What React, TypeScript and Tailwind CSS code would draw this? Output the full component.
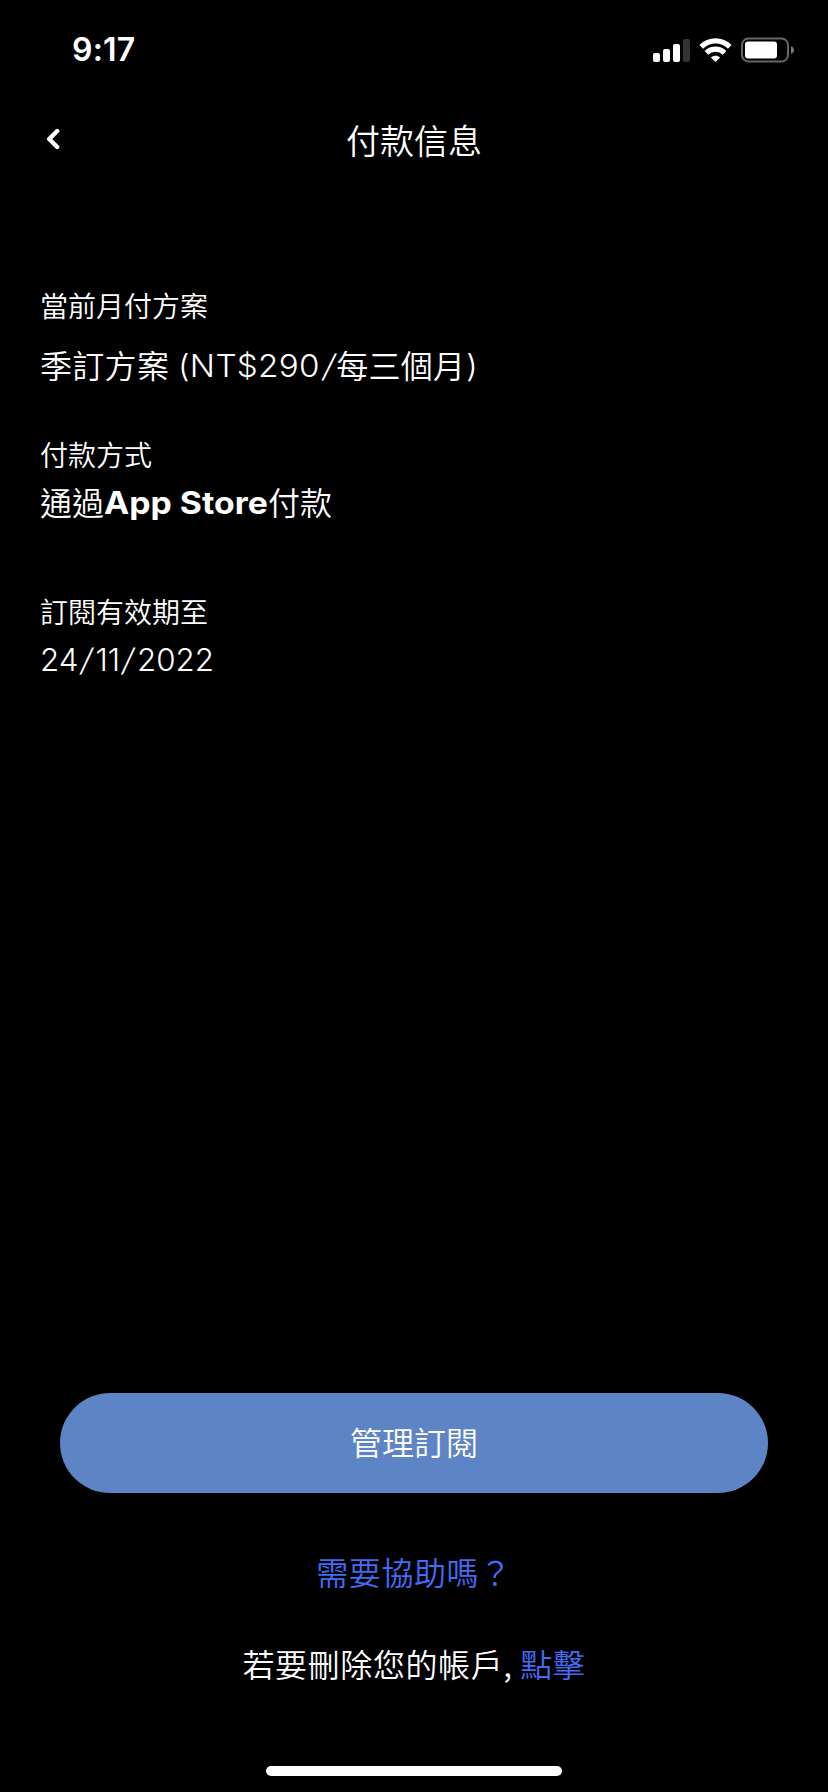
import type { ReactNode } from "react";

const Latin = ({ children, className = "" }: { children: ReactNode; className?: string }) => (
  <span className={`inline-block origin-left -translate-y-px whitespace-pre font-['Inter','Liberation_Sans',sans-serif] ${className}`}>{children}</span>
);

const Slash = () => <span className="mx-[3px] inline-block -skew-x-[11deg]">/</span>;

function StatusBar() {
  return (
    <header className="flex h-[100px] shrink-0 items-center justify-between pl-[72px] pr-[33px]">
      <span className="font-['Inter','Liberation_Sans',sans-serif] text-[32px] leading-[40px] font-[560] tracking-[0.2px]">9:17</span>
      <div className="flex items-center">
        <svg className="block h-[24px] w-[37px]" viewBox="0 0 37 24" fill="#fff">
          <rect x="0" y="15" width="7" height="9" rx="2" />
          <rect x="10" y="11" width="7" height="13" rx="2" />
          <rect x="20" y="6" width="7" height="18" rx="2" />
          <rect x="30" y="1" width="7" height="23" rx="2" fill="#333" />
        </svg>
        <svg className="ml-[9px] block h-[24px] w-[33px]" viewBox="0 0 33 24" fill="none" stroke="#fff" strokeWidth="5.2">
          <path d="M2.200 8.800C10.200 .9 22.800 .9 30.800 8.800" />
          <path d="M7.400 14.800C12.600 9.900 20.400 9.900 25.600 14.800" />
          <path d="M16.500 24L11.900 19.400C14.500 17.200 18.500 17.200 21.100 19.400Z" fill="#fff" stroke="none" />
        </svg>
        <svg className="ml-[9px] block h-[26px] w-[54px]" viewBox="0 0 54 26">
          <rect x="1" y="1.500" width="46" height="23" rx="6.500" fill="none" stroke="#666" strokeWidth="2" />
          <rect x="4" y="4.500" width="32" height="17" rx="3" fill="#fff" />
          <path d="M50 9c4 1.500 4 6.500 0 8z" fill="#7a7a7a" />
        </svg>
      </div>
    </header>
  );
}

export default function App() {
  return (
    <div className="flex h-[1792px] w-[828px] flex-col bg-black font-['Noto_Sans_CJK_TC',sans-serif] font-[350] text-white">
      <StatusBar />
      <nav className="grid h-[80px] shrink-0 grid-cols-[100px_1fr_100px] items-center">
        <svg className="mb-[2px] ml-[46px] h-[22px] w-[14px]" viewBox="0 0 14 22" fill="none" stroke="#fff" strokeWidth="4.4" strokeLinecap="round" strokeLinejoin="round">
          <path d="M11.200 3L3.200 11L11.200 19" />
        </svg>
        <h1 className="h-[40px] text-center text-[34px] leading-[40px]">付款信息</h1>
      </nav>

      <main className="flex flex-1 flex-col pt-[105px] pl-[40px]">
        <section>
          <h2 className="h-[40px] text-[28px] leading-[40px]">當前月付方案</h2>
          <p className="mt-[19px] h-[40px] text-[32px] leading-[40px] whitespace-pre tracking-[0.3px]">
            季訂方案<Latin className="ml-[9px] w-[158px] scale-x-[1.07] text-[31px] font-[350]">(NT$290<Slash /></Latin>每三個月<Latin className="ml-px scale-x-[1.1] text-[31px] font-[350]">)</Latin>
          </p>
        </section>
        <section className="mt-[50px]">
          <h2 className="h-[40px] text-[28px] leading-[40px]">付款方式</h2>
          <p className="mt-[7px] h-[40px] text-[32px] leading-[40px] whitespace-pre">
            通過<Latin className="w-[164px] scale-x-[1.09] text-[31px] font-bold">App Store</Latin>付款
          </p>
        </section>
        <section className="mt-[70px]">
          <h2 className="h-[40px] text-[28px] leading-[40px]">訂閱有效期至</h2>
          <p className="mt-[7px] h-[40px] text-[32px] leading-[40px]">
            <Latin className="scale-x-[1.01] text-[31px] font-[350]">24<Slash />11<Slash />2022</Latin>
          </p>
        </section>
      </main>

      <footer className="flex h-[399px] shrink-0 flex-col items-center">
        <button className="h-[100px] w-[708px] rounded-full bg-[#5d84c4] pb-[5px] text-[32px] leading-[40px] font-[350]">管理訂閱</button>
        <a className="mt-[58px] h-[40px] text-[32px] leading-[40px] tracking-[0.6px] text-[#426cf5]">需要協助嗎？</a>
        <p className="mt-[52px] h-[40px] text-[32px] leading-[40px] tracking-[0.6px] whitespace-pre">
          若要刪除您的帳戶, <a className="text-[#426cf5]">點擊</a>
        </p>
        <div className="mt-[83px] h-[10px] w-[296px] rounded-full bg-white" />
      </footer>
    </div>
  );
}
